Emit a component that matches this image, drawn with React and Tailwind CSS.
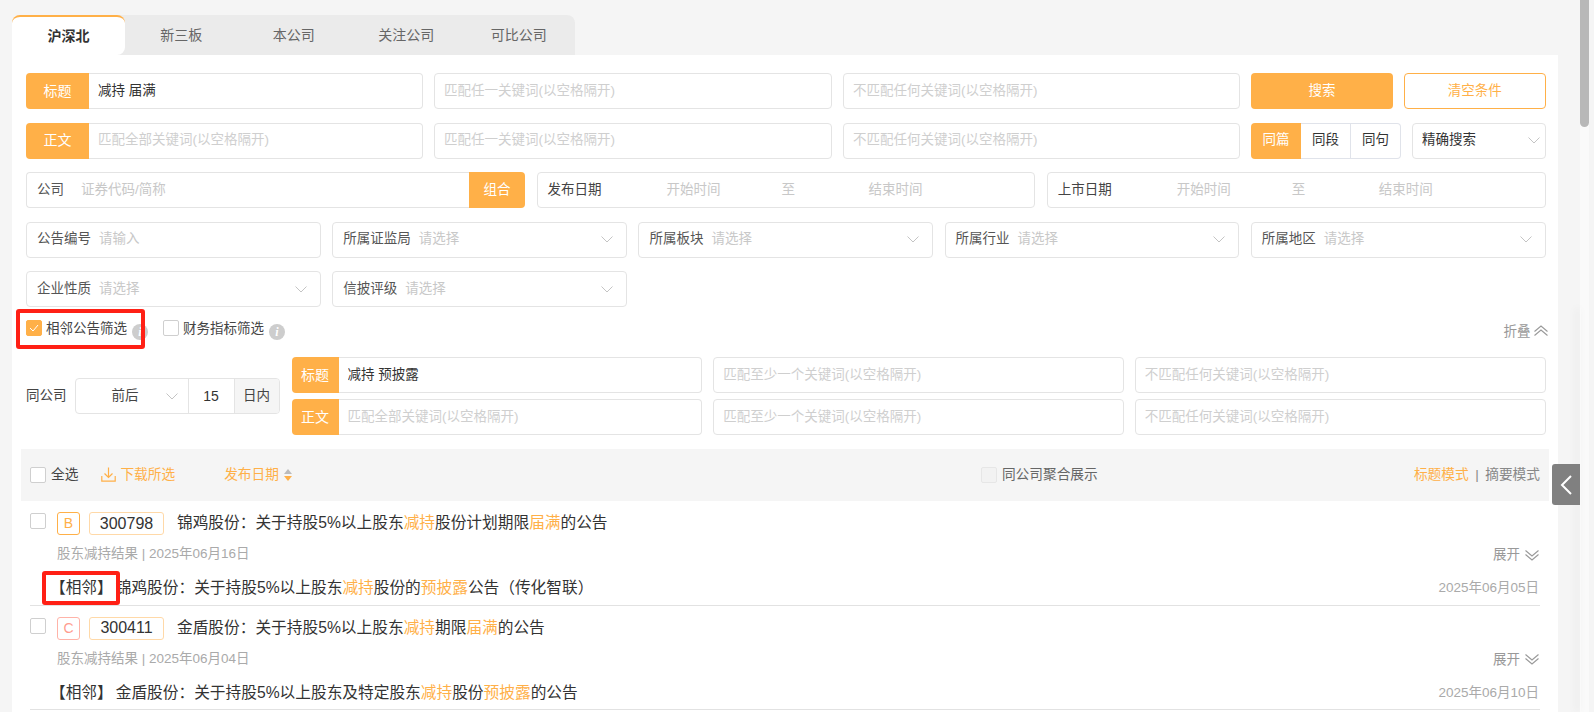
import React from 'react';

const ORANGE_TEXT = 'text-[#ffb048]';

const Chevron = ({ className = '' }) => (
    <svg width="12" height="7" viewBox="0 0 12 7" fill="none" className={className}>
        <polyline points="0.5,0.5 6,6 11.5,0.5" stroke="#c4c4c4" strokeWidth="1" />
    </svg>
);

const DoubleChevron = ({ up }) => (
    <svg width="14" height="11" viewBox="0 0 14 11" fill="none" className={up ? 'rotate-180 mb-[3px]' : ''}>
        <polyline points="0.5,0.5 7,6 13.5,0.5" stroke="#999" strokeWidth="1.1" />
        <polyline points="0.5,4.5 7,10 13.5,4.5" stroke="#999" strokeWidth="1.1" />
    </svg>
);

const Check = ({ checked, disabled }) => (
    <span
        className={`w-[16px] h-[16px] shrink-0 rounded-[2px] border flex items-center justify-center ${checked
            ? 'bg-[#ffb048] border-[#ffb048]'
            : disabled
                ? 'bg-[#f2f2f2] border-[#e6e6e6]'
                : 'bg-white border-[#cfcfcf]'
            }`}
    >
        {checked && (
            <svg width="10" height="8" viewBox="0 0 10 8" fill="none">
                <polyline points="1,4 4,7 9,1" stroke="#fff" strokeWidth="1" />
            </svg>
        )}
    </span>
);

const Info = () => (
    <span className="w-[16px] h-[16px] mt-[4px] rounded-full bg-[#cdcdcd] text-white text-[12px] leading-[16px] font-bold italic text-center font-['Liberation_Serif',serif]">
        i
    </span>
);

const KeywordInput = ({ label, value, placeholder, className = '' }) => (
    <div className={`flex h-[36px] ${className}`}>
        {label && (
            <span className="w-[63px] shrink-0 rounded-l-[4px] bg-[#ffb048] text-white text-[14px] flex items-center justify-center">
                {label}
            </span>
        )}
        <input
            readOnly
            defaultValue={value}
            placeholder={placeholder}
            className={`flex-1 min-w-0 px-[9px] text-[13.5px] text-[#333] placeholder-[#cfcfcf] outline-none bg-white border border-[#e4e4e4] ${label ? 'border-l-0 rounded-r-[4px]' : 'rounded-[4px]'}`}
        />
    </div>
);

const DateField = ({ label }) => (
    <div className="flex-1 h-[36px] rounded-[4px] border border-[#e4e4e4] bg-white flex items-center pl-[10px] text-[13.5px]">
        <span className="w-[119px] text-[#444]">{label}</span>
        <span className="w-[115px] text-[#c8c8c8]">开始时间</span>
        <span className="w-[87px] text-[#c8c8c8]">至</span>
        <span className="text-[#c8c8c8]">结束时间</span>
    </div>
);

const SelectField = ({ label, placeholder }) => (
    <div className="h-[36px] rounded-[4px] border border-[#e4e4e4] bg-white flex items-center pl-[10px] pr-[13px] text-[13.5px]">
        <span className="text-[#555] mr-[8px]">{label}</span>
        <span className="text-[#c8c8c8] flex-1">{placeholder}</span>
        {label !== '公告编号' && <Chevron />}
    </div>
);

const Hl = ({ children }) => <span className={ORANGE_TEXT}>{children}</span>;

const items = [
    {
        level: 'B',
        levelClass: 'text-[#ffb048] border-[#ffb048]',
        code: '300798',
        title: <>锦鸡股份：关于持股5%以上股东<Hl>减持</Hl>股份计划期限<Hl>届满</Hl>的公告</>,
        date: '2025年06月16日',
        related: <>锦鸡股份：关于持股5%以上股东<Hl>减持</Hl>股份的<Hl>预披露</Hl>公告（传化智联）</>,
        relatedDate: '2025年06月05日',
    },
    {
        level: 'C',
        levelClass: 'text-[#ff9d8f] border-[#ffb3a8]',
        code: '300411',
        title: <>金盾股份：关于持股5%以上股东<Hl>减持</Hl>期限<Hl>届满</Hl>的公告</>,
        date: '2025年06月04日',
        related: <>金盾股份：关于持股5%以上股东及特定股东<Hl>减持</Hl>股份<Hl>预披露</Hl>的公告</>,
        relatedDate: '2025年06月10日',
    },
];

const ResultItem = ({ item }) => (
    <div className="ml-[4px] w-[1510px] h-[104.7px] pt-[11px] border-b border-[#e2e2e2]">
        <div className="flex items-start h-[23px]">
            <span className="mt-px"><Check /></span>
            <span className={`ml-[11px] w-[23px] h-[23px] rounded-[3px] border text-[14px] flex items-center justify-center ${item.levelClass}`}>
                {item.level}
            </span>
            <span className="ml-[9px] w-[75px] h-[23px] rounded-[3px] border border-[#ffd9a8] text-[16px] text-[#333] flex items-center justify-center">
                {item.code}
            </span>
            <span className="ml-[13px] text-[15.7px] leading-[21px] text-[#333]">{item.title}</span>
        </div>
        <div className="mt-[9px] h-[20px] pl-[27px] pr-px flex items-center justify-between text-[13.5px] text-[#aaa]">
            <span>股东减持结果 | {item.date}</span>
            <span className="pt-[2px] flex items-center gap-[5px] text-[#999]">
                展开 <DoubleChevron />
            </span>
        </div>
        <div className="mt-[12px] h-[24px] pl-[20px] pr-px flex items-center text-[15.7px] text-[#333]">
            <span>【相邻】</span>
            <span className="ml-[3px] flex-1">{item.related}</span>
            <span className="text-[13.5px] text-[#aaa]">{item.relatedDate}</span>
        </div>
    </div>
);

const tabs = ['新三板', '本公司', '关注公司', '可比公司'];

export default function App() {
    return (
        <div className="relative flex h-[712px] w-[1594px] overflow-hidden bg-[#f5f5f5] font-['Liberation_Sans','Noto_Sans_CJK_SC',sans-serif]">
            <div className="w-[1580px] shrink-0 pl-[12px] pt-[15px]">
                {/* Tabs */}
                <div className="flex w-[563px] h-[40px] rounded-t-[8px] bg-[#ebebeb] text-[14px] text-[#666]">
                    <div className="w-[113px] rounded-t-[8px] rounded-br-[8px] bg-white border-t-2 border-[#ffb048] font-bold text-[#333] flex items-center justify-center">
                        沪深北
                    </div>
                    {tabs.map((t) => (
                        <div key={t} className="w-[112.5px] flex items-center justify-center">{t}</div>
                    ))}
                </div>

                <div className="w-[1546px] h-[657px] bg-white pl-[14px] pr-[12.5px] pt-[18px]">
                    {/* Keyword rows */}
                    <div className="flex gap-[11px]">
                        <KeywordInput className="w-[397px]" label="标题" value="减持 届满" />
                        <KeywordInput className="w-[398px]" placeholder="匹配任一关键词(以空格隔开)" />
                        <KeywordInput className="w-[397px]" placeholder="不匹配任何关键词(以空格隔开)" />
                        <button className="w-[142px] h-[36px] rounded-[4px] bg-[#ffb048] text-white text-[13.5px]">搜索</button>
                        <button className="w-[141.5px] h-[36px] rounded-[4px] border border-[#ffb048] text-[#ffb048] text-[13.5px]">清空条件</button>
                    </div>
                    <div className="flex gap-[11px] mt-[13.5px]">
                        <KeywordInput className="w-[397px]" label="正文" placeholder="匹配全部关键词(以空格隔开)" />
                        <KeywordInput className="w-[398px]" placeholder="匹配任一关键词(以空格隔开)" />
                        <KeywordInput className="w-[397px]" placeholder="不匹配任何关键词(以空格隔开)" />
                        <div className="flex w-[150px] h-[36px] text-[13.5px] text-[#333]">
                            <span className="w-[50px] rounded-l-[4px] bg-[#ffb048] text-white flex items-center justify-center">同篇</span>
                            <span className="w-[50px] border-y border-r border-[#e0e3ea] flex items-center justify-center">同段</span>
                            <span className="flex-1 rounded-r-[4px] border-y border-r border-[#e0e3ea] flex items-center justify-center">同句</span>
                        </div>
                        <div className="w-[133.5px] h-[36px] rounded-[4px] border border-[#e4e4e4] flex items-center justify-between pl-[9px] pr-[5px] text-[13.5px] text-[#333]">
                            精确搜索 <Chevron />
                        </div>
                    </div>

                    {/* Company and dates */}
                    <div className="flex gap-[11.5px] mt-[13.5px]">
                        <div className="flex w-[499px] h-[36px] text-[13.5px]">
                            <div className="flex-1 flex items-center rounded-l-[4px] border border-r-0 border-[#e4e4e4]">
                                <span className="pl-[10px] w-[54px] text-[#555]">公司</span>
                                <span className="flex-1 text-[#c8c8c8]">证券代码/简称</span>
                            </div>
                            <span className="w-[56px] rounded-r-[4px] bg-[#ffb048] text-white flex items-center justify-center">组合</span>
                        </div>
                        <DateField label="发布日期" />
                        <DateField label="上市日期" />
                    </div>

                    {/* Dropdown filters */}
                    <div className="grid grid-cols-5 gap-x-[11.5px] gap-y-[13.5px] mt-[13.5px]">
                        <SelectField label="公告编号" placeholder="请输入" />
                        <SelectField label="所属证监局" placeholder="请选择" />
                        <SelectField label="所属板块" placeholder="请选择" />
                        <SelectField label="所属行业" placeholder="请选择" />
                        <SelectField label="所属地区" placeholder="请选择" />
                        <SelectField label="企业性质" placeholder="请选择" />
                        <SelectField label="信披评级" placeholder="请选择" />
                    </div>

                    {/* Adjacent filter toggles */}
                    <div className="h-[50px] pt-[13px] flex items-start text-[13.5px] text-[#444]">
                        <Check checked />
                        <span className="ml-[4px] leading-[18px]">相邻公告筛选</span>
                        <span className="ml-[5px] flex"><Info /></span>
                        <span className="ml-[15px]"><Check /></span>
                        <span className="ml-[4px] leading-[18px]">财务指标筛选</span>
                        <span className="ml-[5px] flex"><Info /></span>
                        <span className="ml-auto -mr-[2px] mt-[2px] flex items-center gap-[3px] text-[#999]">
                            折叠 <DoubleChevron up />
                        </span>
                    </div>

                    <div className="flex items-center">
                        <span className="w-[48.5px] text-[13.5px] text-[#444]">同公司</span>
                        <div className="flex w-[205px] h-[36px] rounded-[4px] border border-[#e4e4e4] text-[13.5px] text-[#444] overflow-hidden">
                            <span className="w-[113px] border-r border-[#e4e4e4] flex items-center pl-[36px] pr-[10px] justify-between">
                                前后 <Chevron />
                            </span>
                            <span className="w-[46px] border-r border-[#e4e4e4] flex items-center justify-center text-[14px] text-[#333]">15</span>
                            <span className="flex-1 bg-[#f5f5f5] flex items-center justify-center">日内</span>
                        </div>
                        <div className="ml-[12px] flex-1 flex flex-col gap-[6px]">
                            <div className="flex gap-[11px]">
                                <KeywordInput className="flex-1 [&>span]:w-[47px]" label="标题" value="减持 预披露" />
                                <KeywordInput className="flex-1" placeholder="匹配至少一个关键词(以空格隔开)" />
                                <KeywordInput className="flex-1" placeholder="不匹配任何关键词(以空格隔开)" />
                            </div>
                            <div className="flex gap-[11px]">
                                <KeywordInput className="flex-1 [&>span]:w-[47px]" label="正文" placeholder="匹配全部关键词(以空格隔开)" />
                                <KeywordInput className="flex-1" placeholder="匹配至少一个关键词(以空格隔开)" />
                                <KeywordInput className="flex-1" placeholder="不匹配任何关键词(以空格隔开)" />
                            </div>
                        </div>
                    </div>

                    {/* List header */}
                    <div className="-ml-[5px] mt-[14px] w-[1528px] h-[52px] bg-[#f5f5f5] flex items-center pl-[9px] text-[13.7px] text-[#444]">
                        <Check />
                        <span className="ml-[5px]">全选</span>
                        <span className={`ml-[23px] flex items-center gap-[4px] ${ORANGE_TEXT}`}>
                            <svg width="15" height="15" viewBox="0 0 15 15" fill="none" stroke="#ffb048" strokeWidth="1.2">
                                <path d="M7.5 0.5V10M3.5 6.5L7.5 10.5L11.5 6.5M0.8 9V14.2H14.2V9" />
                            </svg>
                            下载所选
                        </span>
                        <span className={`ml-[49px] ${ORANGE_TEXT}`}>发布日期</span>
                        <svg width="8" height="12" viewBox="0 0 8 12" className="ml-[5px]">
                            <polygon points="4,0 8,5 0,5" fill="#bbb" />
                            <polygon points="0,7 8,7 4,12" fill="#ffb048" />
                        </svg>
                        <span className="ml-[689px]"><Check disabled /></span>
                        <span className="ml-[5px] text-[#666]">同公司聚合展示</span>
                        <span className={`ml-auto ${ORANGE_TEXT}`}>标题模式</span>
                        <span className="mx-[6.5px] text-[#888]">|</span>
                        <span className="mr-[9px] text-[#888]">摘要模式</span>
                    </div>

                    {/* Results */}
                    {items.map((item) => (
                        <ResultItem key={item.code} item={item} />
                    ))}
                </div>
            </div>

            {/* Scrollbar */}
            <div className="w-[9px] bg-[#fafafa]">
                <div className="h-[127px] rounded-b-[5px] bg-[#b8b8b8]" />
            </div>

            {/* Side drawer shadow and handle */}
            <div className="absolute left-[1580px] top-[308px] bottom-0 w-px shadow-[-3px_0_8px_rgba(0,0,0,0.2)]" />
            <div className="absolute left-[1552px] top-[464px] w-[28px] h-[41px] rounded-l-[3px] bg-[#808080] flex items-center justify-center">
                <svg width="12" height="20" viewBox="0 0 12 20" fill="none">
                    <polyline points="11,1 2,10 11,19" stroke="#fff" strokeWidth="2" />
                </svg>
            </div>

            {/* Annotation boxes */}
            <div className="absolute left-[16px] top-[309px] w-[129px] h-[40px] rounded-[3px] border-[4px] border-[#ff2015]" />
            <div className="absolute left-[42px] top-[571px] w-[78px] h-[34px] rounded-[3px] border-[4px] border-[#ff2015]" />
        </div>
    );
}
